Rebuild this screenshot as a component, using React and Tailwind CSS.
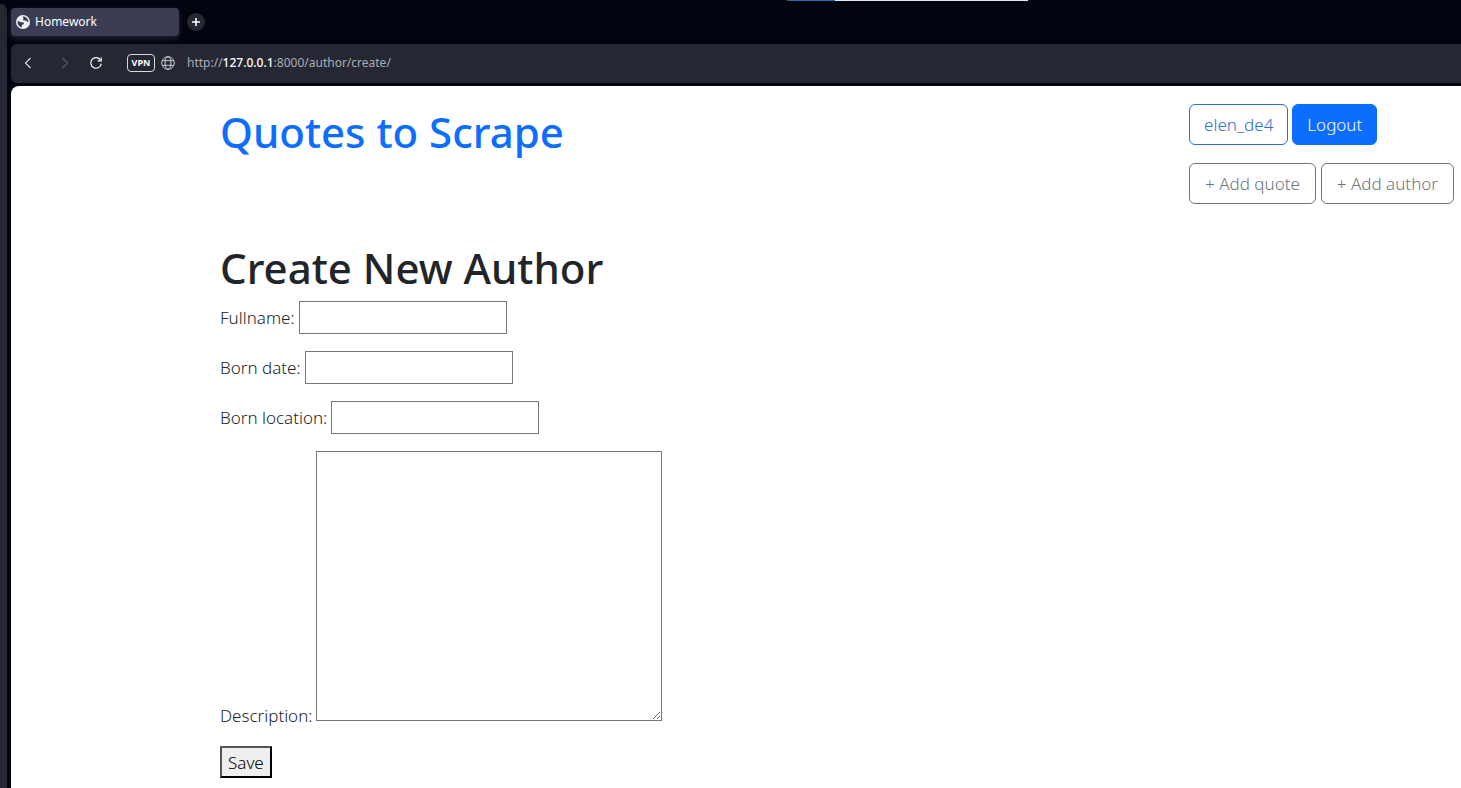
import React from "react";

function TabGlobe() {
  return (
    <svg viewBox="0 0 16 16" className="size-[14px] shrink-0" aria-hidden="true">
      <circle cx="8" cy="8" r="8" fill="#f1f2f7" />
      <path
        d="M1.6 8C1.8 7.2 2.4 6.9 3.2 7.1L5.4 8.2 8 8.2 9.2 9.4 8.6 10.8 7 11.2 6.4 12.8 7.2 14.3C4.2 14 1.8 11.4 1.6 8Z"
        fill="#3b3d54"
      />
      <path d="M7.4 1.8 9.4 1.8 12.2 3.2 14.2 6.4 14.2 7.8 12.8 7.8 11.4 6.4 8.8 6.2 7.8 4.8 8.8 3.6Z" fill="#3b3d54" />
    </svg>
  );
}

function BackIcon() {
  return (
    <svg viewBox="0 0 12 12" className="size-3" fill="none" stroke="currentColor" strokeWidth="1.1" aria-hidden="true">
      <path d="M8.5 1 3.5 6l5 5" />
    </svg>
  );
}

function ForwardIcon() {
  return (
    <svg viewBox="0 0 12 12" className="size-3" fill="none" stroke="currentColor" strokeWidth="1.1" aria-hidden="true">
      <path d="M3.5 1l5 5-5 5" />
    </svg>
  );
}

function ReloadIcon() {
  return (
    <svg viewBox="0 0 14 14" className="size-[14px]" fill="none" stroke="currentColor" strokeWidth="1.2" aria-hidden="true">
      <path d="M11.6 4.2A5.3 5.3 0 1 0 12.3 7.6" />
      <path d="M12.2 1.4V4.9H8.6" />
    </svg>
  );
}

function SiteGlobe() {
  return (
    <svg viewBox="0 0 14 14" className="size-[14px]" fill="none" stroke="currentColor" strokeWidth="1" aria-hidden="true">
      <circle cx="7" cy="7" r="6.3" />
      <ellipse cx="7" cy="7" rx="3" ry="6.3" />
      <path d="M1.3 4.7h11.4M1.3 9.3h11.4" />
    </svg>
  );
}

function TabStrip() {
  return (
    <div className="flex h-11 items-start gap-2 pt-2">
      <button
        type="button"
        className="flex h-7 w-[168px] items-center gap-[5px] rounded-[4px] bg-[#3b3d54] px-[5px] text-[12px] text-white shadow-[0_2px_6px_#3b3d5499]"
      >
        <TabGlobe />
        Homework
      </button>
      <button
        type="button"
        aria-label="New tab"
        className="mt-[5px] flex size-[18px] items-center justify-center rounded-full bg-[#252833] text-white"
      >
        <svg viewBox="0 0 8 8" className="size-2" stroke="currentColor" strokeWidth="1.6" aria-hidden="true">
          <path d="M4 0v8M0 4h8" />
        </svg>
      </button>
    </div>
  );
}

function AddressBar() {
  return (
    <div className="mb-[3px] flex h-[39px] items-center rounded-l-md bg-[#252833] pb-px pl-[11px]">
      <button type="button" aria-label="Back" className="text-[#dcdde2]">
        <BackIcon />
      </button>
      <button type="button" aria-label="Forward" disabled className="ml-[25px] text-[#5a5d68]">
        <ForwardIcon />
      </button>
      <button type="button" aria-label="Reload" className="ml-[18px] text-white">
        <ReloadIcon />
      </button>
      <button
        type="button"
        className="ml-6 flex h-[18px] w-7 items-center justify-center rounded-[4px] border border-[#d5d7de] text-[9px] font-bold text-white"
      >
        VPN
      </button>
      <button type="button" aria-label="Site information" className="ml-[6px] text-[#c9ccd4]">
        <SiteGlobe />
      </button>
      <p className="ml-3 text-[12px] text-[#a9adb8]">
        http://<span className="font-medium text-white">127.0.0.1</span>:8000/author/create/
      </p>
    </div>
  );
}

const buttonBase = "inline-flex h-[41px] items-center rounded-md border";

function PageHeader() {
  return (
    <header className="flex items-start justify-between">
      <h1 className="text-[42px] leading-[56px] font-medium text-[#0d6efd]">
        <a href="#home">Quotes to Scrape</a>
      </h1>
      <nav className="flex flex-col items-start gap-[18px]">
        <div className="flex gap-1">
          <a href="#profile" className={buttonBase + " border-[#2c6fd0] px-[14px] text-[#2c6fd0]"}>
            elen_de4
          </a>
          <button type="button" className={buttonBase + " border-[#0d6efd] bg-[#0d6efd] px-[14px] text-white"}>
            Logout
          </button>
        </div>
        <div className="flex gap-[5px]">
          <a href="#add-quote" className={buttonBase + " border-[#6c757d] px-[15px] text-[#6c757d]"}>
            + Add quote
          </a>
          <a href="#add-author" className={buttonBase + " border-[#6c757d] px-[15px] text-[#6c757d]"}>
            + Add author
          </a>
        </div>
      </nav>
    </header>
  );
}

function Field({ id, label }) {
  return (
    <div className="flex items-center gap-1">
      <label htmlFor={id}>{label}</label>
      <input id={id} name={id} type="text" className="h-[33px] w-[208px] border border-[#767676] bg-white px-1" />
    </div>
  );
}

function AuthorForm() {
  return (
    <form className="flex flex-col items-start gap-[17px]" onSubmit={(event) => event.preventDefault()}>
      <Field id="fullname" label="Fullname:" />
      <Field id="born_date" label="Born date:" />
      <Field id="born_location" label="Born location:" />
      <div className="flex items-end gap-1">
        <label htmlFor="description" className="-mb-2">
          Description:
        </label>
        <textarea id="description" name="description" className="h-[270px] w-[346px] resize border border-[#767676] bg-white p-1" />
      </div>
      <button
        type="submit"
        className="mt-2 flex h-8 items-center border-2 border-t-[#555] border-r-black border-b-black border-l-[#555] bg-[#efefef] px-[6px] text-black"
      >
        Save
      </button>
    </form>
  );
}

export default function App() {
  return (
    <div className="flex min-h-screen gap-1 bg-[#02040f] font-['Noto_Sans','Open_Sans',sans-serif]">
      <aside className="mt-1 w-[7px] shrink-0 rounded-tr-md bg-[#252833]" />
      <div className="relative flex min-w-0 grow flex-col">
        <div className="absolute top-0 left-[776px] flex h-px w-[241px]">
          <span className="w-12 bg-[#1f6cab]" />
          <span className="grow bg-[#dfe8ec]" />
        </div>
        <TabStrip />
        <AddressBar />
        <main className="grow rounded-tl-lg bg-white pt-[18px] pr-[7px] pb-[10px] pl-[209px] text-[17px] leading-[27px] font-light text-[#212529]">
          <PageHeader />
          <h2 className="mt-9 mb-[5px] text-[42px] leading-[56px] font-medium">Create New Author</h2>
          <AuthorForm />
        </main>
      </div>
    </div>
  );
}
